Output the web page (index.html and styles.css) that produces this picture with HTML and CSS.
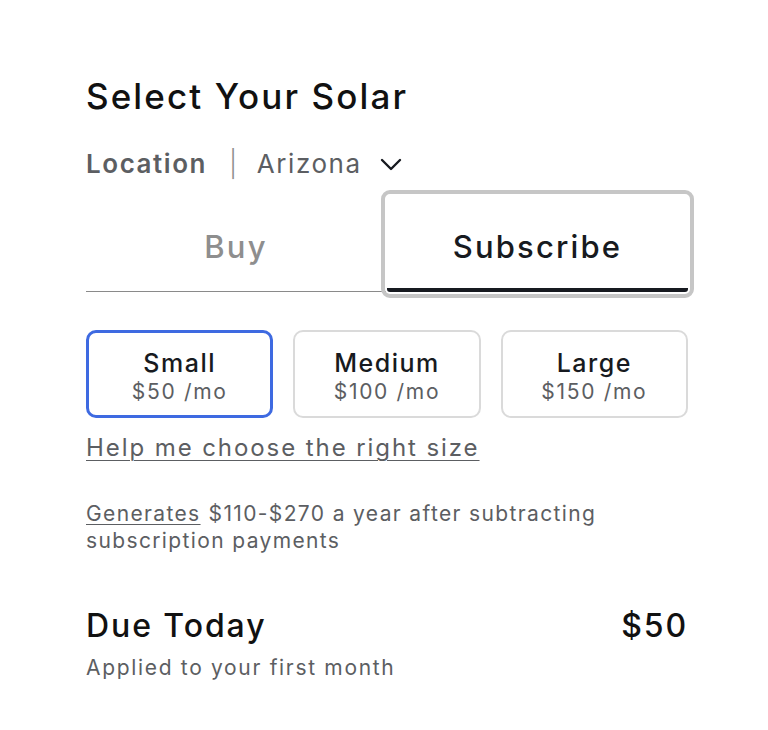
FILE: index.html
```html
<!DOCTYPE html>
<html lang="en">
<head>
<meta charset="utf-8">
<title>Select Your Solar</title>
<link rel="stylesheet" href="styles.css">
</head>
<body>
<main class="panel">
  <h1 class="title">Select Your Solar</h1>
  <div class="location">
    <span class="loc-label">Location</span>
    <span class="loc-sep">|</span>
    <span class="loc-value">Arizona</span>
    <svg class="chevron" width="22" height="14" viewBox="0 0 22 14" aria-hidden="true"><polyline points="2,2 11,11 20,2" fill="none" stroke="#171a20" stroke-width="2.4" stroke-linecap="round" stroke-linejoin="round"/></svg>
  </div>
  <div class="tabs">
    <button class="tab">Buy</button>
    <button class="tab tab-active">Subscribe</button>
  </div>
  <div class="sizes">
    <button class="size size-selected"><span class="size-name">Small</span><span class="size-price">$50 /mo</span></button>
    <button class="size"><span class="size-name">Medium</span><span class="size-price">$100 /mo</span></button>
    <button class="size"><span class="size-name">Large</span><span class="size-price">$150 /mo</span></button>
  </div>
  <a class="help" href="#">Help me choose the right size</a>
  <p class="generates"><a class="gen-link" href="#">Generates</a><span class="gen-text">$110-$270 a year after subtracting</span> <span class="gen-text">subscription payments</span></p>
  <div class="due">
    <span class="due-label">Due Today</span>
    <span class="due-amount">$50</span>
  </div>
  <p class="applied">Applied to your first month</p>
</main>
</body>
</html>
```
FILE: styles.css
```css
html, body {
  margin: 0;
  padding: 0;
  background: #ffffff;
}
body {
  font-family: "Inter", "Liberation Sans", sans-serif;
  color: #171a20;
}
.panel {
  width: 602px;
  padding: 76px 0 40px 86px;
}
.title {
  margin: 0;
  font-size: 35px;
  line-height: 40px;
  font-weight: 500;
  letter-spacing: 0.06em;
  color: #111111;
}
.location {
  margin-top: 32px;
  display: flex;
  align-items: center;
  height: 32px;
  font-size: 26px;
  line-height: 32px;
  letter-spacing: 0.06em;
  color: #5c5e62;
}
.loc-label {
  font-weight: 600;
}
.loc-sep {
  margin: 0 18px 0 22px;
  color: #8e8e8e;
  font-weight: 300;
}
.loc-value {
  font-weight: 400;
}
.chevron {
  margin-left: 18px;
  margin-top: 2px;
}
.tabs {
  margin-top: 16px;
  display: grid;
  grid-template-columns: 300px 302px;
  align-items: end;
}
.tab {
  border: 0;
  background: #ffffff;
  font-family: inherit;
  font-size: 31px;
  line-height: 36px;
  font-weight: 500;
  letter-spacing: 0.07em;
  color: #8e8e8e;
  padding: 33px 0 26px;
  border-bottom: 1px solid #8a8a8a;
}
.tab-active {
  color: #171a20;
  padding-bottom: 23px;
  border-bottom: 4px solid #171a20;
  border-radius: 3px;
  outline: 4px solid #c6c6c6;
  outline-offset: 2px;
  position: relative;
  margin-left: 1px;
}
.sizes {
  margin-top: 38px;
  display: grid;
  grid-template-columns: repeat(3, 1fr);
  gap: 20px;
}
.size {
  height: 88px;
  box-sizing: border-box;
  border: 2px solid #dadada;
  border-radius: 10px;
  background: #ffffff;
  font-family: inherit;
  display: flex;
  flex-direction: column;
  align-items: center;
  justify-content: center;
  padding: 5px 0 0;
}
.size-selected {
  border: 3px solid #3e6ae1;
}
.size-name {
  font-size: 25px;
  line-height: 29px;
  font-weight: 500;
  letter-spacing: 0.06em;
  color: #171a20;
}
.size-price {
  font-size: 21px;
  line-height: 27px;
  font-weight: 400;
  letter-spacing: 0.08em;
  color: #5c5e62;
}
.help {
  display: inline-block;
  margin-top: 15px;
  font-size: 24px;
  line-height: 30px;
  letter-spacing: 0.08em;
  color: #5c5e62;
  text-decoration: underline;
  text-decoration-thickness: 1px;
  text-underline-offset: 4px;
}
.generates {
  margin: 37px 0 0;
  font-size: 21px;
  line-height: 27px;
  letter-spacing: 0.065em;
  color: #5c5e62;
  width: 560px;
}
.gen-link {
  color: #5c5e62;
  text-decoration: underline;
  text-decoration-thickness: 1px;
  text-underline-offset: 3px;
  margin-right: 8px;
}
.due {
  margin-top: 54px;
  display: flex;
  justify-content: space-between;
  align-items: center;
  font-size: 32px;
  line-height: 36px;
  font-weight: 500;
  letter-spacing: 0.06em;
  color: #111111;
}
.applied {
  margin: 11px 0 0;
  font-size: 21px;
  line-height: 26px;
  letter-spacing: 0.08em;
  color: #5c5e62;
}
```
